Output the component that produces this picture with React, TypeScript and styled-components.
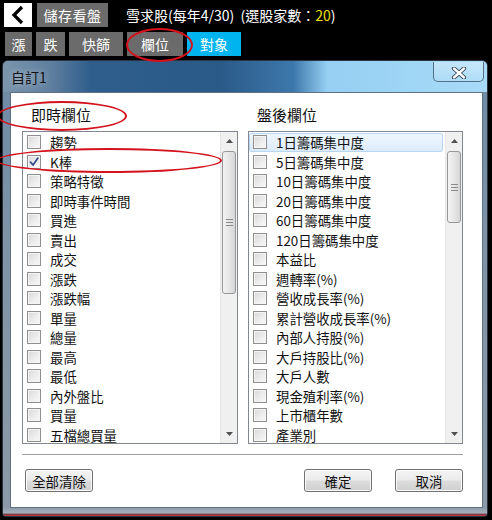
import React from 'react';
import styled, { createGlobalStyle } from 'styled-components';

const Global = createGlobalStyle`
  html, body { margin: 0; padding: 0; background: #000; }
  body { font-family: "Noto Sans CJK TC", "Noto Sans", sans-serif; }
  * { box-sizing: border-box; }
`;

const Screen = styled.div`
  position: relative;
  width: 492px;
  height: 520px;
  background: #000;
  overflow: hidden;
  display: flex;
  flex-direction: column;
`;

const TopRow = styled.div`
  display: flex;
  align-items: center;
  height: 24px;
  margin: 3px 0 0 4px;
  gap: 5px;
`;

const BackButton = styled.div`
  width: 28px;
  height: 24px;
  background: #fff;
  display: flex;
  align-items: center;
  justify-content: center;
`;

const GrayButton = styled.div<{ w: number }>`
  width: ${(p) => p.w}px;
  height: 24px;
  background: #6b6b6b;
  color: #fff;
  font-size: 14px;
  display: flex;
  align-items: center;
  justify-content: center;
  letter-spacing: 0.5px;
`;

const Title = styled.div`
  margin-left: 13px;
  color: #fff;
  font-size: 14px;
  white-space: pre;
`;

const Yellow = styled.span`
  color: #f0e000;
`;

const TabRow = styled.div`
  display: flex;
  height: 24px;
  margin: 5px 0 0 5px;
  gap: 4px;
`;

const Tab = styled.div<{ w: number; active?: boolean }>`
  width: ${(p) => p.w}px;
  height: 24px;
  background: ${(p) => (p.active ? '#00b4f0' : '#6b6b6b')};
  color: #fff;
  font-size: 14px;
  display: flex;
  align-items: center;
  justify-content: center;
`;

const Dialog = styled.div`
  margin: 4px 0 0 2px;
  width: 486px;
  height: 457px;
  border: 1px solid #2c3440;
  border-radius: 6px 6px 4px 4px;
  background: linear-gradient(180deg, #6d8aa5 0%, #7f93a6 40%, #8c9aa8 100%);
  display: flex;
  flex-direction: column;
  overflow: hidden;
`;

const TitleBar = styled.div`
  height: 31px;
  display: flex;
  align-items: center;
  justify-content: space-between;
  padding: 0 3px 0 8px;
  background: linear-gradient(90deg, #7b95ad 0%, #5f7f9f 10%, #2f5e8c 18%, #2a5a88 45%, #3d78ac 60%, #95cff2 67%, #a9dbf8 100%);
`;

const TitleText = styled.div`
  font-size: 14px;
  color: #111;
  text-shadow: 0 0 6px rgba(255, 255, 255, 0.6);
`;

const CloseButton = styled.div`
  width: 51px;
  height: 20px;
  margin-top: -9px;
  border: 1px solid rgba(40, 60, 80, 0.7);
  border-top: none;
  border-radius: 0 0 5px 5px;
  background: linear-gradient(180deg, rgba(255, 255, 255, 0.35), rgba(255, 255, 255, 0.1));
  display: flex;
  align-items: center;
  justify-content: center;
  padding-top: 2px;
`;

const Client = styled.div`
  margin: 0 4px 0 7px;
  height: 416px;
  background: #fff;
  border: 1px solid #5f7082;
  padding: 0 19px 0 11px;
  display: flex;
  flex-direction: column;
`;

const Columns = styled.div`
  display: grid;
  grid-template-columns: 216px 215px;
  column-gap: 10px;
  margin-top: 12px;
`;

const Column = styled.div`
  display: flex;
  flex-direction: column;
`;

const Heading = styled.div`
  font-size: 15px;
  line-height: 20px;
  color: #111;
  margin: 0 0 6px 9px;
  height: 20px;
`;

const ListBox = styled.div`
  height: 313px;
  border: 1px solid #828790;
  display: flex;
  background: #fff;
`;

const Rows = styled.div`
  flex: 1;
  display: flex;
  flex-direction: column;
  padding-top: 0.5px;
`;

const Row = styled.div<{ selected?: boolean }>`
  height: 19.5px;
  display: flex;
  align-items: center;
  padding-left: 3px;
  margin-right: 2px;
  font-size: 13.4px;
  color: #111;
  gap: 9px;
  border: 1px solid ${(p) => (p.selected ? '#b9d7f2' : 'transparent')};
  background: ${(p) => (p.selected ? 'linear-gradient(180deg, #eef6fd, #dcebfa)' : 'transparent')};
  border-radius: 2px;
  white-space: nowrap;
`;

const Check = styled.div`
  width: 14px;
  height: 14px;
  border: 1px solid #8f8f8f;
  background: linear-gradient(135deg, #d8d8d8 0%, #eeeeee 60%, #f8f8f8 100%);
  box-shadow: inset 0 0 0 1px #f4f4f4;
  display: flex;
  align-items: center;
  justify-content: center;
  flex: none;
`;

const ScrollBar = styled.div`
  width: 17px;
  background: #f0f0f0;
  border-left: 1px solid #e6e6e6;
  display: flex;
  flex-direction: column;
`;

const Arrow = styled.div`
  height: 18px;
  display: flex;
  align-items: center;
  justify-content: center;
  flex: none;
`;

const Track = styled.div`
  flex: 1;
  display: flex;
  flex-direction: column;
`;

const Thumb = styled.div<{ h: number }>`
  height: ${(p) => p.h}px;
  margin: 1px 1px 0 1px;
  border: 1px solid #979797;
  border-radius: 3px;
  background: linear-gradient(90deg, #f3f3f3 0%, #e6e6e6 50%, #d6d6d6 100%);
  display: flex;
  align-items: center;
  justify-content: center;
`;

const Grip = styled.div`
  width: 7px;
  height: 7px;
  border-top: 1px solid #8a8a8a;
  border-bottom: 1px solid #8a8a8a;
  position: relative;
  &::after {
    content: '';
    position: absolute;
    left: 0;
    right: 0;
    top: 2px;
    border-top: 1px solid #8a8a8a;
  }
`;

const Separator = styled.div`
  margin-top: 10px;
  height: 2px;
  border-top: 1px solid #a0a0a0;
  border-bottom: 1px solid #fff;
`;

const ButtonRow = styled.div`
  display: flex;
  align-items: center;
  margin-top: 13px;
  padding-left: 3px;
`;

const Spacer = styled.div`
  flex: 1;
`;

const WinButton = styled.div<{ w: number; gapLeft?: number }>`
  width: ${(p) => p.w}px;
  height: 23px;
  margin-left: ${(p) => p.gapLeft ?? 0}px;
  border: 1px solid #707070;
  border-radius: 3px;
  background: linear-gradient(180deg, #f4f4f4 0%, #ebebeb 48%, #dddddd 52%, #cfcfcf 100%);
  box-shadow: inset 0 0 0 1px #fbfbfb;
  font-size: 13.4px;
  color: #111;
  display: flex;
  align-items: center;
  justify-content: center;
`;

const BottomFrame = styled.div`
  flex: 1;
  background: linear-gradient(180deg, #8e9caa 0%, #a3aeb9 60%, #7a2a30 85%, #e04050 100%);
`;

const Ellipse = styled.div<{ x: number; y: number; w: number; h: number }>`
  position: absolute;
  left: ${(p) => p.x}px;
  top: ${(p) => p.y}px;
  width: ${(p) => p.w}px;
  height: ${(p) => p.h}px;
  border: 2px solid #d3121c;
  border-radius: 50%;
  pointer-events: none;
`;

const leftItems = [
  '趨勢', 'K棒', '策略特徵', '即時事件時間', '買進', '賣出', '成交', '漲跌',
  '漲跌幅', '單量', '總量', '最高', '最低', '內外盤比', '買量', '五檔總買量',
];

const rightItems = [
  '1日籌碼集中度', '5日籌碼集中度', '10日籌碼集中度', '20日籌碼集中度', '60日籌碼集中度',
  '120日籌碼集中度', '本益比', '週轉率(%)', '營收成長率(%)', '累計營收成長率(%)',
  '內部人持股(%)', '大戶持股比(%)', '大戶人數', '現金殖利率(%)', '上市櫃年數', '產業別',
];

const CheckMark = () => (
  <svg width="10" height="10" viewBox="0 0 10 10">
    <path d="M1.5 5.2 L4 8 L8.8 1.2" stroke="#3a4c8e" strokeWidth="1.8" fill="none" strokeLinecap="round" strokeLinejoin="round" />
  </svg>
);

const UpArrow = () => (
  <svg width="7" height="4" viewBox="0 0 7 4"><path d="M0 4 L3.5 0 L7 4 Z" fill="#505050" /></svg>
);
const DownArrow = () => (
  <svg width="7" height="4" viewBox="0 0 7 4"><path d="M0 0 L3.5 4 L7 0 Z" fill="#505050" /></svg>
);

const List: React.FC<{ items: string[]; checked?: number; selected?: number; thumb: number }> = ({ items, checked, selected, thumb }) => (
  <ListBox>
    <Rows>
      {items.map((t, i) => (
        <Row key={t} selected={i === selected}>
          <Check>{i === checked ? <CheckMark /> : null}</Check>
          <span>{t}</span>
        </Row>
      ))}
    </Rows>
    <ScrollBar>
      <Arrow><UpArrow /></Arrow>
      <Track>
        <Thumb h={thumb}><Grip /></Thumb>
      </Track>
      <Arrow><DownArrow /></Arrow>
    </ScrollBar>
  </ListBox>
);

export default function App() {
  return (
    <>
      <Global />
      <Screen>
        <TopRow>
          <BackButton>
            <svg width="14" height="20" viewBox="0 0 14 20">
              <path d="M11 2 L3 10 L11 18" stroke="#000" strokeWidth="3.2" fill="none" />
            </svg>
          </BackButton>
          <GrayButton w={71}>儲存看盤</GrayButton>
          <Title>
            雪求股(每年4/30)  (選股家數：<Yellow>20</Yellow>)
          </Title>
        </TopRow>
        <TabRow>
          <Tab w={27}>漲</Tab>
          <Tab w={29}>跌</Tab>
          <Tab w={54}>快篩</Tab>
          <Tab w={56}>欄位</Tab>
          <Tab w={54} active>對象</Tab>
        </TabRow>
        <Dialog>
          <TitleBar>
            <TitleText>自訂1</TitleText>
            <CloseButton>
              <svg width="16" height="12" viewBox="0 0 16 12">
                <path d="M3 1.5 L13 10.5 M13 1.5 L3 10.5" stroke="#2a3b4e" strokeWidth="4.2" strokeLinecap="round" />
                <path d="M3 1.5 L13 10.5 M13 1.5 L3 10.5" stroke="#fff" strokeWidth="2.4" strokeLinecap="round" />
              </svg>
            </CloseButton>
          </TitleBar>
          <Client>
            <Columns>
              <Column>
                <Heading>即時欄位</Heading>
                <List items={leftItems} checked={1} thumb={143} />
              </Column>
              <Column>
                <Heading>盤後欄位</Heading>
                <List items={rightItems} selected={0} thumb={72} />
              </Column>
            </Columns>
            <Separator />
            <ButtonRow>
              <WinButton w={68}>全部清除</WinButton>
              <Spacer />
              <WinButton w={68}>確定</WinButton>
              <WinButton w={68} gapLeft={23}>取消</WinButton>
            </ButtonRow>
          </Client>
          <BottomFrame />
        </Dialog>
        <Ellipse x={126} y={28} w={67} h={34} />
        <Ellipse x={-3} y={101} w={130} h={30} />
        <Ellipse x={-4} y={148} w={226} h={25} />
      </Screen>
    </>
  );
}
